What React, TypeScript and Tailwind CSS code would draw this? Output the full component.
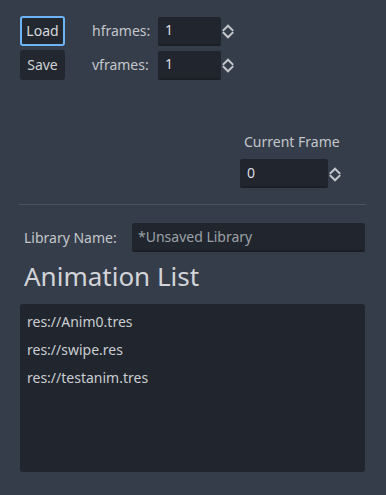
import React from "react";

function Arrows() {
  return (
    <svg width="12" height="16" viewBox="0 0 12 16" className="shrink-0">
      <path d="M1.5 7.2 L6 2.7 L10.5 7.2" fill="none" stroke="#c3c7cd" strokeWidth="2" strokeLinecap="square" />
      <path d="M1.5 9.8 L6 14.3 L10.5 9.8" fill="none" stroke="#c3c7cd" strokeWidth="2" strokeLinecap="square" />
    </svg>
  );
}

function SpinField({ value, width }: { value: string; width: string }) {
  return (
    <div className="flex items-center gap-[1px]">
      <div
        className={`${width} h-[29px] bg-[#21262e] border-b-[2px] border-[#1b1f25] rounded-[2px] flex items-center pl-[7px] text-[#dcdee1]`}
      >
        {value}
      </div>
      <Arrows />
    </div>
  );
}

export default function App() {
  return (
    <div
      className="w-[386px] h-[495px] bg-[#363d4a] text-[14px] leading-[20px] overflow-hidden"
      style={{ fontFamily: '"Noto Sans", "Open Sans", sans-serif' }}
    >
      {/* top row */}
      <div className="flex pt-[16px] pl-[20px]">
        <div className="flex flex-col gap-[4px] w-[45px]">
          <div className="h-[30px] rounded-[3px] border-[2px] border-[#6cb4f5] bg-[#232830] flex items-center justify-center text-[#d7d9dc]">
            Load
          </div>
          <div className="h-[30px] rounded-[3px] bg-[#232830] flex items-center justify-center text-[#d0d3d6]">
            Save
          </div>
        </div>
        <div className="flex flex-col gap-[4px] ml-[27px]">
          <div className="h-[30px] flex items-center">
            <span className="w-[66px] text-[#c3c6cb]">hframes:</span>
            <SpinField value="1" width="w-[63px]" />
          </div>
          <div className="h-[30px] flex items-center">
            <span className="w-[66px] text-[#c3c6cb]">vframes:</span>
            <SpinField value="1" width="w-[63px]" />
          </div>
        </div>
      </div>

      {/* current frame */}
      <div className="flex flex-col mt-[52px] pl-[240px]">
        <span className="pl-[4px] text-[#c3c6cb]">Current Frame</span>
        <div className="mt-[7px]">
          <SpinField value="0" width="w-[88px]" />
        </div>
      </div>

      {/* separator */}
      <div className="mt-[16px] ml-[19px] w-[347px] h-[1px] bg-[#4c535e]" />

      {/* library name */}
      <div className="flex items-center mt-[18px] pl-[20px]">
        <span className="w-[112px] pl-[4px] text-[#c3c6cb]">Library Name:</span>
        <div className="w-[233px] h-[29px] bg-[#21262e] border-b-[2px] border-[#1b1f25] rounded-[2px] flex items-center pl-[6px] text-[#9ca1a8]">
          *Unsaved Library
        </div>
      </div>

      {/* heading */}
      <div className="mt-[7px] pl-[24px] text-[26px] leading-[35px] text-[#d2d4d8]">Animation List</div>

      {/* list */}
      <div className="mt-[10px] ml-[20px] w-[345px] h-[168px] bg-[#21262e] rounded-[3px] pt-[4px] pl-[7px] text-[#cacdd1]">
        <div className="h-[28px] leading-[28px]">res://Anim0.tres</div>
        <div className="h-[28px] leading-[28px]">res://swipe.res</div>
        <div className="h-[28px] leading-[28px]">res://testanim.tres</div>
      </div>
    </div>
  );
}
